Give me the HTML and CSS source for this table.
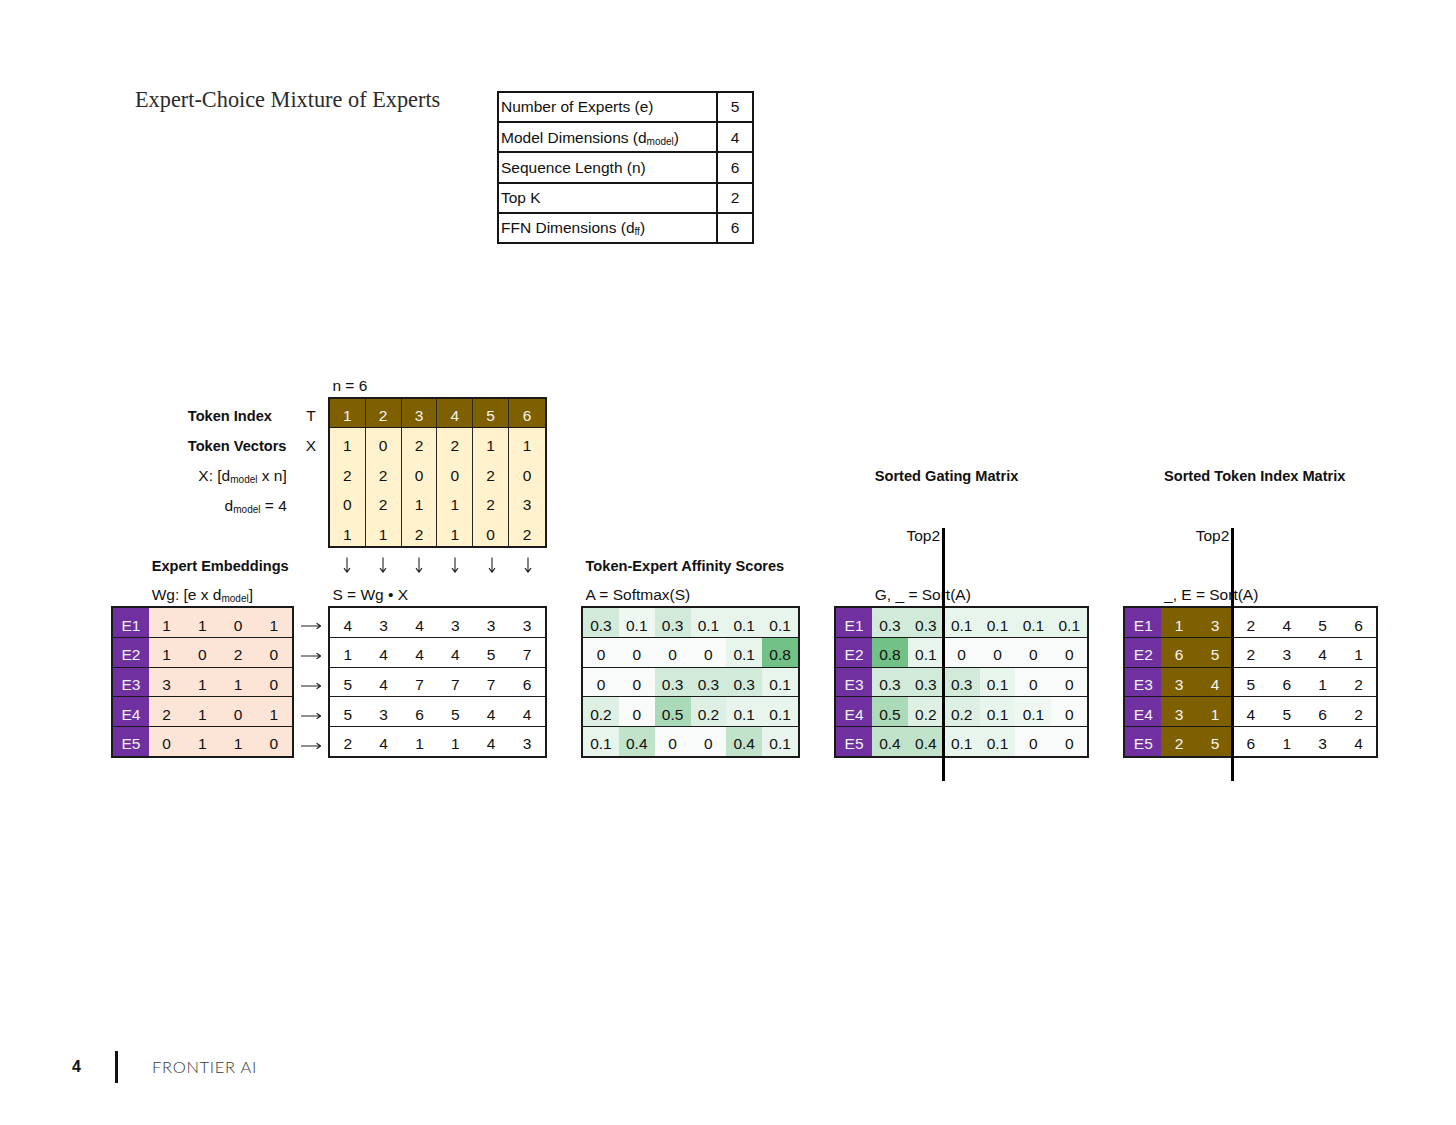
FILE: index.html
```html
<!DOCTYPE html>
<html lang="en">
<head>
<meta charset="utf-8">
<title>Expert-Choice Mixture of Experts</title>
<link rel="stylesheet" href="styles.css">
</head>
<body>
<div class="page">
  <header class="head">
    <h1 class="title">Expert-Choice Mixture of Experts</h1>
    <table class="params">
      <tr><td class="pk">Number of Experts (e)</td><td class="pv">5</td></tr>
      <tr><td class="pk">Model Dimensions (d<sub>model</sub>)</td><td class="pv">4</td></tr>
      <tr><td class="pk">Sequence Length (n)</td><td class="pv">6</td></tr>
      <tr><td class="pk">Top K</td><td class="pv">2</td></tr>
      <tr><td class="pk">FFN Dimensions (d<sub>ff</sub>)</td><td class="pv">6</td></tr>
    </table>
  </header>

  <section class="sheet">
    <div class="t p-n"><span>n = 6</span></div>
    <div class="t b p-ti"><span>Token Index</span></div>
    <div class="t ctr p-tl"><span>T</span></div>
    <div class="t b p-tv"><span>Token Vectors</span></div>
    <div class="t ctr p-xl"><span>X</span></div>
    <div class="t rt p-xd"><span>X: [d<sub>model</sub> x n]</span></div>
    <div class="t rt p-dm"><span>d<sub>model</sub> = 4</span></div>

    <div class="tokmat">
      <div class="c hd">1</div><div class="c hd">2</div><div class="c hd">3</div><div class="c hd">4</div><div class="c hd">5</div><div class="c hd">6</div>
      <div class="c">1</div><div class="c">0</div><div class="c">2</div><div class="c">2</div><div class="c">1</div><div class="c">1</div>
      <div class="c">2</div><div class="c">2</div><div class="c">0</div><div class="c">0</div><div class="c">2</div><div class="c">0</div>
      <div class="c">0</div><div class="c">2</div><div class="c">1</div><div class="c">1</div><div class="c">2</div><div class="c">3</div>
      <div class="c">1</div><div class="c">1</div><div class="c">2</div><div class="c">1</div><div class="c">0</div><div class="c">2</div>
    </div>

    <div class="down">
      <span class="arr"><svg class="ad" viewBox="0 0 10 16" aria-hidden="true"><path d="M5 0.5V15M2 11.2L5 15.2L8 11.2"/></svg></span>
      <span class="arr"><svg class="ad" viewBox="0 0 10 16" aria-hidden="true"><path d="M5 0.5V15M2 11.2L5 15.2L8 11.2"/></svg></span>
      <span class="arr"><svg class="ad" viewBox="0 0 10 16" aria-hidden="true"><path d="M5 0.5V15M2 11.2L5 15.2L8 11.2"/></svg></span>
      <span class="arr"><svg class="ad" viewBox="0 0 10 16" aria-hidden="true"><path d="M5 0.5V15M2 11.2L5 15.2L8 11.2"/></svg></span>
      <span class="arr"><svg class="ad" viewBox="0 0 10 16" aria-hidden="true"><path d="M5 0.5V15M2 11.2L5 15.2L8 11.2"/></svg></span>
      <span class="arr"><svg class="ad" viewBox="0 0 10 16" aria-hidden="true"><path d="M5 0.5V15M2 11.2L5 15.2L8 11.2"/></svg></span>
    </div>

    <div class="t b p-ee"><span>Expert Embeddings</span></div>
    <div class="t b p-teas"><span>Token-Expert Affinity Scores</span></div>
    <div class="t b p-sgm"><span>Sorted Gating Matrix</span></div>
    <div class="t b p-stim"><span>Sorted Token Index Matrix</span></div>
    <div class="t rt p-top2g"><span>Top2</span></div>
    <div class="t rt p-top2e"><span>Top2</span></div>

    <div class="t p-wg"><span>Wg: [e x d<sub>model</sub>]</span></div>
    <div class="t p-s"><span>S = Wg • X</span></div>
    <div class="t p-a"><span>A = Softmax(S)</span></div>
    <div class="t p-g"><span>G, _ = Sort(A)</span></div>
    <div class="t p-e"><span>_, E = Sort(A)</span></div>

    <div class="mat n5 m-wg">
      <div class="r"><div class="c ex">E1</div><div class="c pe">1</div><div class="c pe">1</div><div class="c pe">0</div><div class="c pe">1</div></div>
      <div class="r"><div class="c ex">E2</div><div class="c pe">1</div><div class="c pe">0</div><div class="c pe">2</div><div class="c pe">0</div></div>
      <div class="r"><div class="c ex">E3</div><div class="c pe">3</div><div class="c pe">1</div><div class="c pe">1</div><div class="c pe">0</div></div>
      <div class="r"><div class="c ex">E4</div><div class="c pe">2</div><div class="c pe">1</div><div class="c pe">0</div><div class="c pe">1</div></div>
      <div class="r"><div class="c ex">E5</div><div class="c pe">0</div><div class="c pe">1</div><div class="c pe">1</div><div class="c pe">0</div></div>
    </div>

    <div class="rarrows">
      <span class="rarr"><svg class="ar" viewBox="0 0 20 8" aria-hidden="true"><path d="M0 4H19.4M15.6 1.3L19.6 4L15.6 6.7"/></svg></span>
      <span class="rarr"><svg class="ar" viewBox="0 0 20 8" aria-hidden="true"><path d="M0 4H19.4M15.6 1.3L19.6 4L15.6 6.7"/></svg></span>
      <span class="rarr"><svg class="ar" viewBox="0 0 20 8" aria-hidden="true"><path d="M0 4H19.4M15.6 1.3L19.6 4L15.6 6.7"/></svg></span>
      <span class="rarr"><svg class="ar" viewBox="0 0 20 8" aria-hidden="true"><path d="M0 4H19.4M15.6 1.3L19.6 4L15.6 6.7"/></svg></span>
      <span class="rarr"><svg class="ar" viewBox="0 0 20 8" aria-hidden="true"><path d="M0 4H19.4M15.6 1.3L19.6 4L15.6 6.7"/></svg></span>
    </div>

    <div class="mat n6 m-s">
      <div class="r"><div class="c">4</div><div class="c">3</div><div class="c">4</div><div class="c">3</div><div class="c">3</div><div class="c">3</div></div>
      <div class="r"><div class="c">1</div><div class="c">4</div><div class="c">4</div><div class="c">4</div><div class="c">5</div><div class="c">7</div></div>
      <div class="r"><div class="c">5</div><div class="c">4</div><div class="c">7</div><div class="c">7</div><div class="c">7</div><div class="c">6</div></div>
      <div class="r"><div class="c">5</div><div class="c">3</div><div class="c">6</div><div class="c">5</div><div class="c">4</div><div class="c">4</div></div>
      <div class="r"><div class="c">2</div><div class="c">4</div><div class="c">1</div><div class="c">1</div><div class="c">4</div><div class="c">3</div></div>
    </div>

    <div class="mat n6 m-a">
      <div class="r"><div class="c h3">0.3</div><div class="c h1a">0.1</div><div class="c h3">0.3</div><div class="c h1">0.1</div><div class="c h1">0.1</div><div class="c h1">0.1</div></div>
      <div class="r"><div class="c h0">0</div><div class="c h0">0</div><div class="c h0">0</div><div class="c h0">0</div><div class="c h1">0.1</div><div class="c h8">0.8</div></div>
      <div class="r"><div class="c h0">0</div><div class="c h0">0</div><div class="c h3">0.3</div><div class="c h3">0.3</div><div class="c h3">0.3</div><div class="c h1">0.1</div></div>
      <div class="r"><div class="c h2">0.2</div><div class="c h0">0</div><div class="c h5">0.5</div><div class="c h2">0.2</div><div class="c h1">0.1</div><div class="c h1">0.1</div></div>
      <div class="r"><div class="c h1">0.1</div><div class="c h4">0.4</div><div class="c h0">0</div><div class="c h0">0</div><div class="c h4">0.4</div><div class="c h1">0.1</div></div>
    </div>

    <div class="mat n7 m-g">
      <div class="r"><div class="c ex">E1</div><div class="c h3">0.3</div><div class="c h3">0.3</div><div class="c h1">0.1</div><div class="c h1">0.1</div><div class="c h1">0.1</div><div class="c h1">0.1</div></div>
      <div class="r"><div class="c ex">E2</div><div class="c h8">0.8</div><div class="c h1">0.1</div><div class="c h0">0</div><div class="c h0">0</div><div class="c h0">0</div><div class="c h0">0</div></div>
      <div class="r"><div class="c ex">E3</div><div class="c h3">0.3</div><div class="c h3">0.3</div><div class="c h3">0.3</div><div class="c h1">0.1</div><div class="c h0">0</div><div class="c h0">0</div></div>
      <div class="r"><div class="c ex">E4</div><div class="c h5">0.5</div><div class="c h2">0.2</div><div class="c h2">0.2</div><div class="c h1">0.1</div><div class="c h1a">0.1</div><div class="c h0">0</div></div>
      <div class="r"><div class="c ex">E5</div><div class="c h4">0.4</div><div class="c h4">0.4</div><div class="c h1">0.1</div><div class="c h1">0.1</div><div class="c h0">0</div><div class="c h0">0</div></div>
    </div>

    <div class="mat n7 m-e">
      <div class="r"><div class="c ex">E1</div><div class="c br">1</div><div class="c br">3</div><div class="c">2</div><div class="c">4</div><div class="c">5</div><div class="c">6</div></div>
      <div class="r"><div class="c ex">E2</div><div class="c br">6</div><div class="c br">5</div><div class="c">2</div><div class="c">3</div><div class="c">4</div><div class="c">1</div></div>
      <div class="r"><div class="c ex">E3</div><div class="c br">3</div><div class="c br">4</div><div class="c">5</div><div class="c">6</div><div class="c">1</div><div class="c">2</div></div>
      <div class="r"><div class="c ex">E4</div><div class="c br">3</div><div class="c br">1</div><div class="c">4</div><div class="c">5</div><div class="c">6</div><div class="c">2</div></div>
      <div class="r"><div class="c ex">E5</div><div class="c br">2</div><div class="c br">5</div><div class="c">6</div><div class="c">1</div><div class="c">3</div><div class="c">4</div></div>
    </div>

    <div class="vl vl-g"></div>
    <div class="vl vl-e"></div>
  </section>

  <footer class="foot">
    <span class="pnum">4</span>
    <span class="bar"></span>
    <span class="brand">FRONTIER AI</span>
  </footer>
</div>
</body>
</html>
```

FILE: styles.css
```css
* { box-sizing: border-box; }

body {
  margin: 0;
  background: #ffffff;
  color: #111111;
  font-family: "Liberation Sans", Arial, sans-serif;
}

.page {
  width: 1456px;
  height: 1125px;
  overflow: hidden;
}

/* ---------- header ---------- */
.head {
  display: flex;
  align-items: flex-start;
  height: 242px;
  padding: 87px 0 0 135px;
}

.title {
  margin: 0;
  width: 362px;
  font-family: "Liberation Serif", "Times New Roman", serif;
  font-weight: 400;
  font-size: 22.3px;
  line-height: 26px;
  color: #2b2b2b;
}

.params {
  margin-top: 4px;
  border-collapse: collapse;
  width: 257px;
}

.params td {
  border: 2px solid #151515;
  height: 30.2px;
  padding: 0 2px;
  font-size: 15.5px;
  line-height: 1;
  white-space: nowrap;
}

.params .pv {
  width: 36px;
  padding: 0;
  text-align: center;
}

sub {
  font-size: 10px;
  line-height: 0;
  vertical-align: -2px;
}

/* ---------- spreadsheet canvas ---------- */
.sheet {
  display: grid;
  grid-template-columns: repeat(35, 36.17px);
  grid-template-rows: repeat(14, 29.9px);
  margin: 126.1px 0 0 112px;
}

.t {
  display: flex;
  align-items: flex-end;
  padding: 0 3.5px 3px;
  white-space: nowrap;
  font-size: 15.5px;
  line-height: 1.15;
}

.b { font-weight: 700; font-size: 14.6px; }
.rt { justify-content: flex-end; padding-right: 6px; }
.ctr { justify-content: center; }

.p-n    { grid-column: 7 / span 3;  grid-row: 1; }
.p-ti   { grid-column: 3 / span 3;  grid-row: 2; }
.p-tl   { grid-column: 6;           grid-row: 2; }
.p-tv   { grid-column: 3 / span 3;  grid-row: 3; }
.p-xl   { grid-column: 6;           grid-row: 3; }
.p-xd   { grid-column: 1 / span 5;  grid-row: 4; }
.p-dm   { grid-column: 1 / span 5;  grid-row: 5; }
.p-ee   { grid-column: 2 / span 5;  grid-row: 7; }
.p-teas { grid-column: 14 / span 6; grid-row: 7; }
.p-sgm  { grid-column: 22 / span 6; grid-row: 4; }
.p-stim { grid-column: 30 / span 6; grid-row: 4; }
.p-top2g { grid-column: 22 / span 2; grid-row: 6; padding-right: 3.5px; }
.p-top2e { grid-column: 30 / span 2; grid-row: 6; padding-right: 3.5px; }
.p-wg   { grid-column: 2 / span 4;  grid-row: 8; }
.p-s    { grid-column: 7 / span 6;  grid-row: 8; }
.p-a    { grid-column: 14 / span 6; grid-row: 8; }
.p-g    { grid-column: 22 / span 6; grid-row: 8; }
.p-e    { grid-column: 30 / span 6; grid-row: 8; }

/* cells */
.c {
  display: flex;
  align-items: flex-end;
  justify-content: center;
  padding-bottom: 2.5px;
  font-size: 15.5px;
  line-height: 1.15;
  color: #111111;
}

/* token matrix */
.tokmat {
  grid-column: 7 / span 6;
  grid-row: 2 / span 5;
  margin: -1px;
  display: grid;
  grid-template-columns: repeat(6, 1fr);
  grid-template-rows: repeat(5, 1fr);
  border: 2px solid #1a1a1a;
  background: #fff2cc;
}

.tokmat > .c {
  border-right: 1px solid #2a2a2a;
  padding-bottom: 3px;
}

.tokmat > .c:nth-child(6n) { border-right: 0; }

.tokmat > .hd {
  background: #7f6000;
  color: #f4f4f4;
  border-bottom: 1px solid #1a1a1a;
}

/* arrows */
.down {
  grid-column: 7 / span 6;
  grid-row: 7;
  display: grid;
  grid-template-columns: repeat(6, 1fr);
}

.arr {
  display: flex;
  align-items: flex-end;
  justify-content: center;
  padding-bottom: 4px;
}

.ad {
  width: 10px;
  height: 16px;
  fill: none;
  stroke: #222222;
  stroke-width: 1.1;
}

.rarrows {
  grid-column: 6;
  grid-row: 9 / span 5;
  display: grid;
  grid-template-rows: repeat(5, 1fr);
}

.rarr {
  display: flex;
  align-items: flex-end;
  justify-content: center;
  padding-bottom: 7px;
}

.ar {
  width: 20px;
  height: 8px;
  fill: none;
  stroke: #222222;
  stroke-width: 1.1;
}

/* matrices */
.mat {
  grid-row: 9 / span 5;
  margin: -1px;
  display: flex;
  flex-direction: column;
  border: 2px solid #1a1a1a;
}

.mat .r {
  flex: 1;
  display: grid;
  border-bottom: 1px solid #1a1a1a;
}

.mat .r:last-child { border-bottom: 0; }

.n5 .r { grid-template-columns: repeat(5, 1fr); }
.n6 .r { grid-template-columns: repeat(6, 1fr); }
.n7 .r { grid-template-columns: repeat(7, 1fr); }

.m-wg { grid-column: 1 / span 5; }
.m-s  { grid-column: 7 / span 6; }
.m-a  { grid-column: 14 / span 6; }
.m-g  { grid-column: 21 / span 7; }
.m-e  { grid-column: 29 / span 7; }

.ex { background: #7030a0; color: #f2f2f2; }
.pe { background: #fce4d6; }
.br { background: #7f6000; color: #f4f4f4; }

/* heat scale (white to green) */
.h0  { background: #f8fbf9; }
.h1  { background: #e8f5ec; }
.h1a { background: #eef8f1; }
.h2  { background: #ddf0e3; }
.h3  { background: #d1eada; }
.h4  { background: #c0e3ca; }
.h5  { background: #abdab8; }
.h8  { background: #72c288; }

/* Top2 divider lines */
.vl {
  grid-row: 6 / span 9;
  width: 0;
  justify-self: start;
  margin: 10.4px 0 5.7px -1.5px;
  border-left: 3px solid #000000;
  z-index: 2;
}

.vl-g { grid-column: 24; }
.vl-e { grid-column: 32; }

/* ---------- footer ---------- */
.foot {
  display: flex;
  align-items: center;
  height: 32px;
  margin-top: 264.3px;
  padding-left: 72px;
}

.pnum {
  width: 43px;
  font-weight: 700;
  font-size: 16px;
  color: #111111;
}

.bar {
  width: 3px;
  height: 32px;
  margin-right: 34px;
  background: #111111;
}

.brand {
  font-family: Lato, "Liberation Sans", sans-serif;
  font-weight: 300;
  font-size: 16.5px;
  letter-spacing: 0.7px;
  color: #3a3a3a;
}
```
